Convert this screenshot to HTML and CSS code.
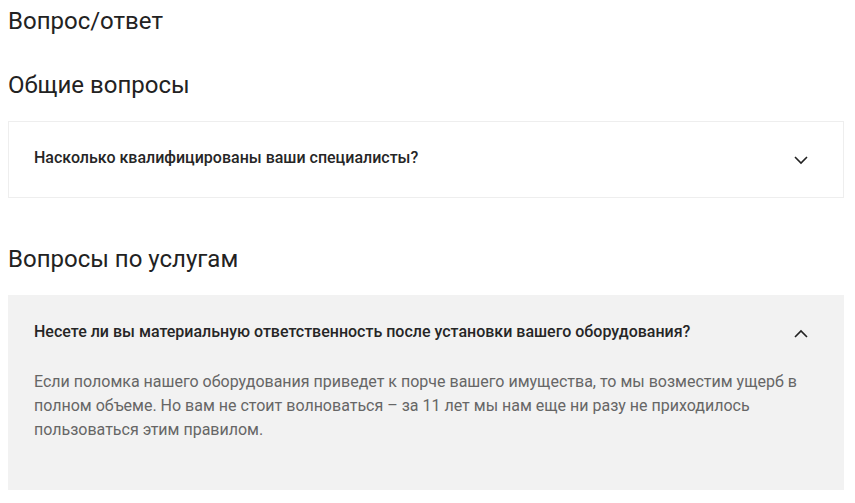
FILE: index.html
```html
<!DOCTYPE html>
<html lang="ru">
<head>
<meta charset="utf-8">
<link rel="stylesheet" href="styles.css">
</head>
<body>
<main class="faq">
  <h1 class="page-title">Вопрос/ответ</h1>

  <section class="group">
    <h2 class="group-title">Общие вопросы</h2>
    <div class="item">
      <div class="item-head">
        <span class="question">Насколько квалифицированы ваши специалисты?</span>
        <svg class="chev" width="16" height="10" viewBox="0 0 16 10"><path d="M2 2 L8 8 L14 2" fill="none" stroke="#222" stroke-width="1.6"/></svg>
      </div>
    </div>
  </section>

  <section class="group group-services">
    <h2 class="group-title">Вопросы по услугам</h2>
    <div class="item item-open">
      <div class="item-head">
        <span class="question">Несете ли вы материальную ответственность после установки вашего оборудования?</span>
        <svg class="chev" width="16" height="10" viewBox="0 0 16 10"><path d="M2 8 L8 2 L14 8" fill="none" stroke="#222" stroke-width="1.6"/></svg>
      </div>
      <p class="answer">Если поломка нашего оборудования приведет к порче вашего имущества, то мы возместим ущерб в полном объеме. Но вам не стоит волноваться – за 11 лет мы нам еще ни разу не приходилось пользоваться этим правилом.</p>
    </div>
  </section>
</main>
</body>
</html>
```

FILE: styles.css
```css
html, body {
  margin: 0;
  padding: 0;
  background: #fff;
}
body {
  padding: 8px 11px 8px 8px;
  font-family: Roboto, "Noto Sans", sans-serif;
  color: #222;
}
.page-title,
.group-title {
  margin: 0;
  font-size: 24px;
  line-height: 26px;
  font-weight: 400;
  color: #222;
}
.group {
  margin-top: 38px;
}
.group-services {
  margin-top: 48px;
}
.group-title {
  margin-bottom: 23px;
}
.item {
  border: 1px solid #eeeeee;
  background: #fff;
}
.item-open {
  border-color: #f2f2f2;
  background: #f2f2f2;
}
.item-head {
  display: flex;
  align-items: center;
  justify-content: space-between;
  height: 75px;
  padding: 0 34px 0 25px;
}
.question {
  padding: 0 0 4px;
  font-size: 16px;
  font-weight: 500;
  line-height: 23px;
  color: #262626;
}
.chev {
  display: block;
  flex: none;
}
.answer {
  margin: -1px 0 0;
  padding: 0 45px 47px 25px;
  font-size: 16px;
  line-height: 24px;
  color: #666;
}
```
